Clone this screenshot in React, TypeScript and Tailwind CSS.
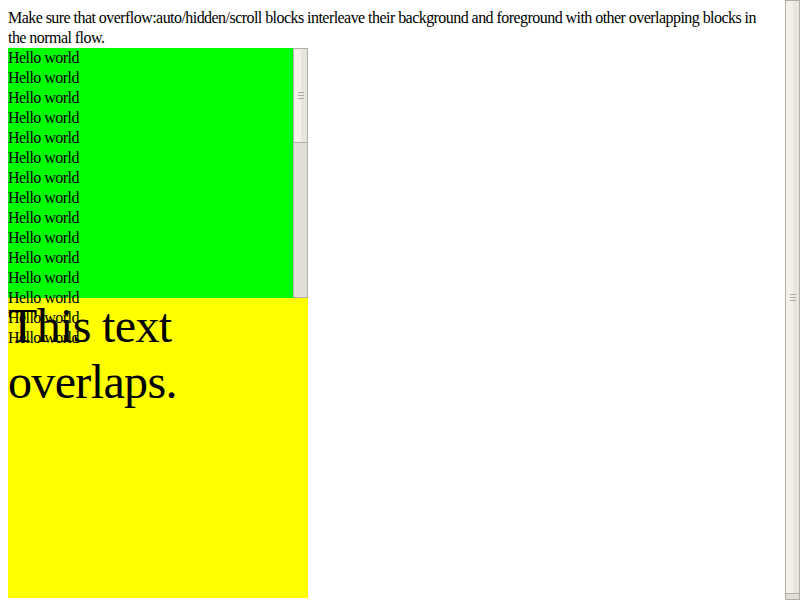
import React from "react";

function Grip() {
  return (
    <div className="flex flex-col gap-[2px]">
      <div className="h-px w-[6px] bg-[#aeaaa4]" />
      <div className="h-px w-[6px] bg-[#aeaaa4]" />
      <div className="h-px w-[6px] bg-[#aeaaa4]" />
    </div>
  );
}

function Scrollbar({ thumb }: { thumb: string }) {
  return (
    <div className="flex h-full w-[15px] shrink-0 flex-col">
      <div className={`${thumb} relative flex shrink-0 border border-[#b2aea8]`}>
        <div className="h-full w-[7px] bg-[#f4f0ea]" />
        <div className="h-full flex-1 bg-[#e8e4de]" />
        <div className="absolute inset-0 flex items-center justify-center">
          <Grip />
        </div>
      </div>
      <div className="flex-1 border border-t-0 border-[#b2aea8] bg-[#e1ddd7]" />
    </div>
  );
}

export default function App() {
  const lines = Array.from({ length: 15 });
  return (
    <div
      className="flex h-[600px] w-[800px] overflow-hidden bg-white text-black"
      style={{ fontFamily: '"Liberation Serif", "Times New Roman", serif' }}
    >
      <div className="h-[600px] w-[785px] shrink-0 overflow-hidden px-2 pt-2">
        <div className="text-[16px] leading-[20px] tracking-[-0.55px]">
          Make sure that overflow:auto/hidden/scroll blocks interleave their background and foreground with other overlapping blocks in the normal flow.
        </div>
        <div className="flex h-[250px] w-[300px] bg-[#00ff00]">
          <div className="relative z-10 h-[250px] w-[285px] text-[16px] leading-[20px] tracking-[-0.55px]">
            {lines.map((_, i) => (
              <div key={i}>Hello world</div>
            ))}
          </div>
          <Scrollbar thumb="h-[95px]" />
        </div>
        <div className="h-[300px] w-[300px] bg-[#ffff00] text-[48px] leading-[56px] tracking-[-0.65px]">
          This text overlaps.
        </div>
      </div>
      <Scrollbar thumb="h-[594px]" />
    </div>
  );
}
